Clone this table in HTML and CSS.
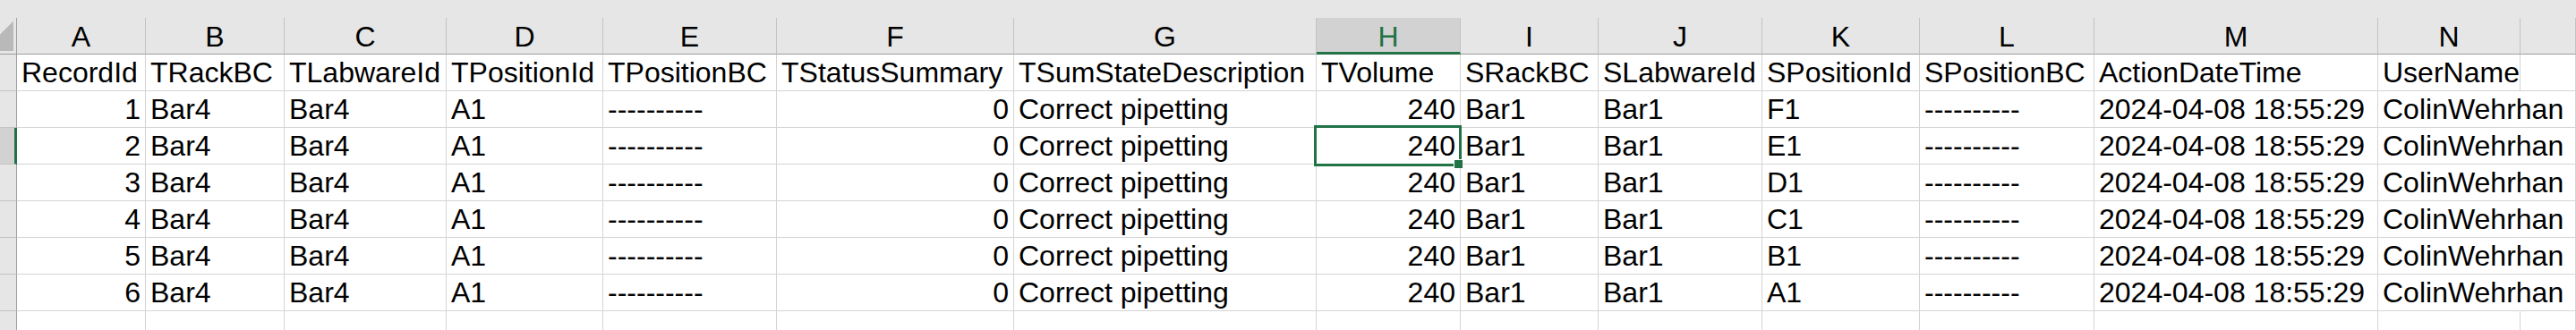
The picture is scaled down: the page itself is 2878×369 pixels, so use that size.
FILE: index.html
```html
<!DOCTYPE html>
<html>
<head>
<meta charset="utf-8">
<link rel="stylesheet" href="styles.css">
</head>
<body>
<div class="sheet">
  <div class="topbar"></div>
  <div class="grid">
    <div class="corner"><svg class="tri" width="18" height="40" viewBox="0 0 18 40"><polygon points="0,18.5 15,3.5 15,37 0,37" fill="#b9b9b9"/></svg></div>
    <div class="colhdr">A</div>
    <div class="colhdr">B</div>
    <div class="colhdr">C</div>
    <div class="colhdr">D</div>
    <div class="colhdr">E</div>
    <div class="colhdr">F</div>
    <div class="colhdr">G</div>
    <div class="colhdr sel">H</div>
    <div class="colhdr">I</div>
    <div class="colhdr">J</div>
    <div class="colhdr">K</div>
    <div class="colhdr">L</div>
    <div class="colhdr">M</div>
    <div class="colhdr">N</div>
    <div class="colhdr"></div>

    <div class="rowhdr"></div>
    <div class="c">RecordId</div><div class="c">TRackBC</div><div class="c">TLabwareId</div><div class="c">TPositionId</div><div class="c">TPositionBC</div><div class="c">TStatusSummary</div><div class="c">TSumStateDescription</div><div class="c">TVolume</div><div class="c">SRackBC</div><div class="c">SLabwareId</div><div class="c">SPositionId</div><div class="c">SPositionBC</div><div class="c">ActionDateTime</div><div class="c">UserName</div><div class="c"></div>

    <div class="rowhdr"></div>
    <div class="c num">1</div><div class="c">Bar4</div><div class="c">Bar4</div><div class="c">A1</div><div class="c">----------</div><div class="c num">0</div><div class="c">Correct pipetting</div><div class="c num">240</div><div class="c">Bar1</div><div class="c">Bar1</div><div class="c">F1</div><div class="c">----------</div><div class="c">2024-04-08 18:55:29</div><div class="c spill">ColinWehrhan</div><div class="c"></div>

    <div class="rowhdr selrow"></div>
    <div class="c num">2</div><div class="c">Bar4</div><div class="c">Bar4</div><div class="c">A1</div><div class="c">----------</div><div class="c num">0</div><div class="c">Correct pipetting</div><div class="c num active">240<span class="selbox"></span><span class="handle"></span></div><div class="c">Bar1</div><div class="c">Bar1</div><div class="c">E1</div><div class="c">----------</div><div class="c">2024-04-08 18:55:29</div><div class="c spill">ColinWehrhan</div><div class="c"></div>

    <div class="rowhdr"></div>
    <div class="c num">3</div><div class="c">Bar4</div><div class="c">Bar4</div><div class="c">A1</div><div class="c">----------</div><div class="c num">0</div><div class="c">Correct pipetting</div><div class="c num">240</div><div class="c">Bar1</div><div class="c">Bar1</div><div class="c">D1</div><div class="c">----------</div><div class="c">2024-04-08 18:55:29</div><div class="c spill">ColinWehrhan</div><div class="c"></div>

    <div class="rowhdr"></div>
    <div class="c num">4</div><div class="c">Bar4</div><div class="c">Bar4</div><div class="c">A1</div><div class="c">----------</div><div class="c num">0</div><div class="c">Correct pipetting</div><div class="c num">240</div><div class="c">Bar1</div><div class="c">Bar1</div><div class="c">C1</div><div class="c">----------</div><div class="c">2024-04-08 18:55:29</div><div class="c spill">ColinWehrhan</div><div class="c"></div>

    <div class="rowhdr"></div>
    <div class="c num">5</div><div class="c">Bar4</div><div class="c">Bar4</div><div class="c">A1</div><div class="c">----------</div><div class="c num">0</div><div class="c">Correct pipetting</div><div class="c num">240</div><div class="c">Bar1</div><div class="c">Bar1</div><div class="c">B1</div><div class="c">----------</div><div class="c">2024-04-08 18:55:29</div><div class="c spill">ColinWehrhan</div><div class="c"></div>

    <div class="rowhdr"></div>
    <div class="c num">6</div><div class="c">Bar4</div><div class="c">Bar4</div><div class="c">A1</div><div class="c">----------</div><div class="c num">0</div><div class="c">Correct pipetting</div><div class="c num">240</div><div class="c">Bar1</div><div class="c">Bar1</div><div class="c">A1</div><div class="c">----------</div><div class="c">2024-04-08 18:55:29</div><div class="c spill">ColinWehrhan</div><div class="c"></div>

    <div class="rowhdr"></div>
    <div class="c"></div><div class="c"></div><div class="c"></div><div class="c"></div><div class="c"></div><div class="c"></div><div class="c"></div><div class="c"></div><div class="c"></div><div class="c"></div><div class="c"></div><div class="c"></div><div class="c"></div><div class="c"></div><div class="c"></div>
  </div>
</div>
</body>
</html>
```

FILE: styles.css
```css
html, body {
  margin: 0;
  padding: 0;
  width: 2878px;
  height: 369px;
  overflow: hidden;
  background: #ffffff;
}

.sheet {
  font-family: "Liberation Sans", Arial, sans-serif;
  font-size: 32px;
  color: #000;
  height: 369px;
  overflow: hidden;
}

.topbar {
  height: 20px;
  background: #e6e6e6;
}

.grid {
  display: grid;
  grid-template-columns: 19px 144px 155px 181px 175px 194px 265px 338px 161px 154px 183px 176px 195px 317px 159px 1fr;
  grid-template-rows: repeat(8, 41px) 22px;
  background: #ffffff;
}

.corner {
  background: #e6e6e6;
  border-right: 1px solid #9f9f9f;
  border-bottom: 1px solid #9f9f9f;
  box-sizing: border-box;
  overflow: hidden;
}

.tri {
  display: block;
}

.colhdr {
  box-sizing: border-box;
  background: #e6e6e6;
  border-right: 1px solid #c3c3c3;
  border-bottom: 1px solid #9f9f9f;
  text-align: center;
  line-height: 39px;
  padding-top: 2px;
  white-space: nowrap;
  overflow: hidden;
}

.colhdr.sel {
  background: #d2d2d2;
  color: #217346;
  border-bottom: 3px solid #217346;
}

.rowhdr {
  box-sizing: border-box;
  background: #e6e6e6;
  border-right: 1px solid #9f9f9f;
  border-bottom: 1px solid #c3c3c3;
}

.rowhdr.selrow {
  background: #d2d2d2;
  border-right: 3px solid #217346;
}

.c {
  box-sizing: border-box;
  border-right: 1px solid #d4d4d4;
  border-bottom: 1px solid #d4d4d4;
  padding: 1px 5px 0 5px;
  line-height: 39px;
  white-space: nowrap;
  overflow: hidden;
}

.c.num {
  text-align: right;
}

.c.spill {
  overflow: visible;
  border-right-color: transparent;
}

.c.active {
  position: relative;
  overflow: visible;
}

.selbox {
  position: absolute;
  left: -3px;
  top: -3px;
  width: 165px;
  height: 46px;
  box-sizing: border-box;
  border: 3px solid #217346;
}

.handle {
  position: absolute;
  left: 153px;
  top: 35px;
  width: 10px;
  height: 10px;
  box-sizing: border-box;
  background: #217346;
  border: 1px solid #ffffff;
  border-right: none;
  border-bottom: none;
}
```
